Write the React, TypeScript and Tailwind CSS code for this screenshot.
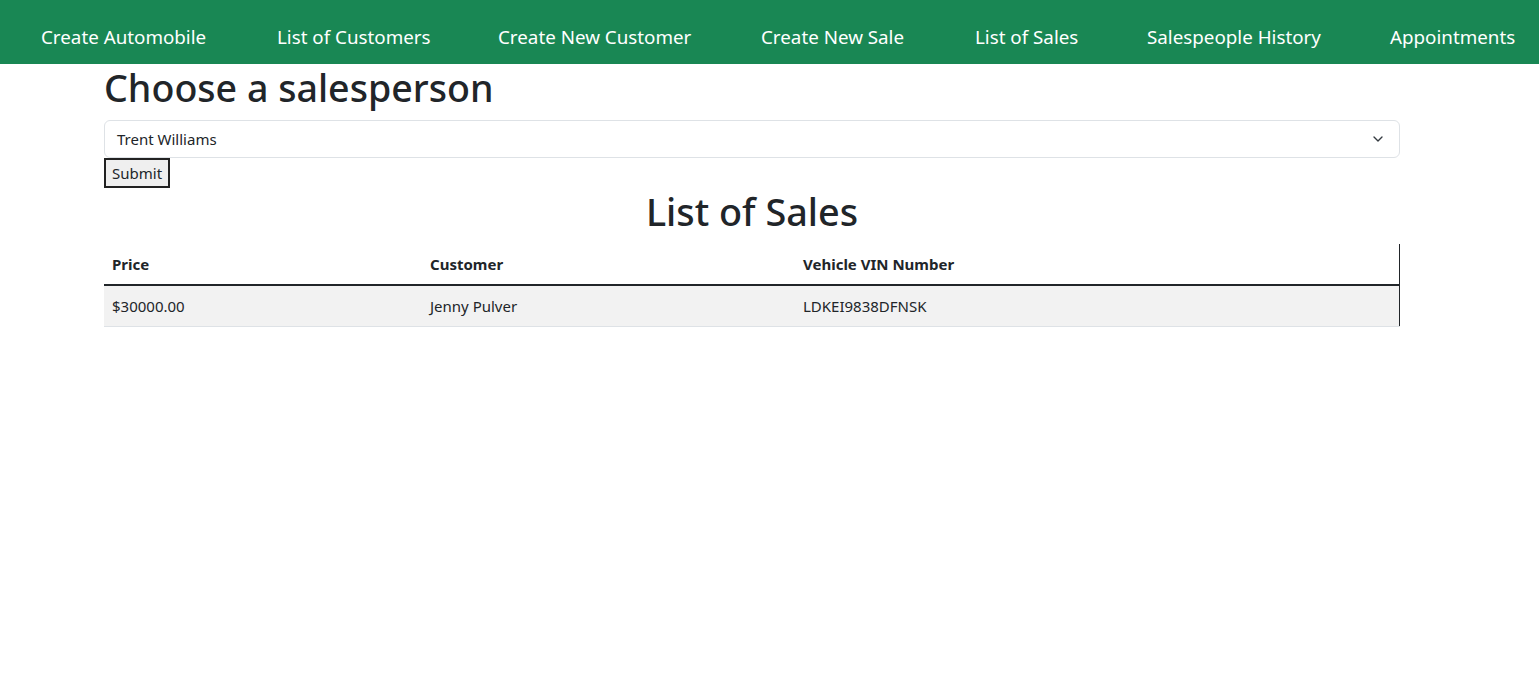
import { ChevronDown } from "lucide-react";

const navItems = [
  { label: "Create Automobile", w: "w-[236px]" },
  { label: "List of Customers", w: "w-[221px]" },
  { label: "Create New Customer", w: "w-[263px]" },
  { label: "Create New Sale", w: "w-[214px]" },
  { label: "List of Sales", w: "w-[172px]" },
  { label: "Salespeople History", w: "w-[243px]" },
  { label: "Appointments", w: "w-[140px]" },
];

const sales = [
  { price: "$30000.00", customer: "Jenny Pulver", vin: "LDKEI9838DFNSK" },
];

function App() {
  return (
    <div className="min-h-[696px] bg-white text-[#212529] font-['Segoe_UI','Noto_Sans',sans-serif]">
      {/* Nav */}
      <nav className="h-16 bg-[#198754] flex items-center pl-[41px] pt-[10px]">
        {navItems.map((item) => (
          <a key={item.label} className={`${item.w} shrink-0 text-white text-[18.8px] leading-none whitespace-nowrap`}>
            {item.label}
          </a>
        ))}
      </nav>

      <div className="ml-[104px] w-[1296px]">
        <h1 className="text-[37.6px] leading-[48px] font-medium mb-2">Choose a salesperson</h1>

        <div className="h-[38px] border border-[#dee2e6] rounded-md flex items-center justify-between pl-3 pr-[13px]">
          <span className="text-[15px]">Trent Williams</span>
          <ChevronDown size={16} strokeWidth={2} className="text-[#343a40]" />
        </div>

        <button className="h-[30px] px-[6px] border-2 border-[#222] bg-[#efefef] text-[15px] leading-none">
          Submit
        </button>

        <h1 className="text-[37.8px] leading-[48px] font-medium mb-2 text-center">List of Sales</h1>

        <table className="w-full border-r border-[#212529] text-[15px] border-collapse">
          <thead>
            <tr className="border-b-2 border-[#212529]">
              <th className="w-[318px] text-left font-bold px-2 h-[41px]">Price</th>
              <th className="w-[373px] text-left font-bold px-2 h-[41px]">Customer</th>
              <th className="text-left font-bold px-2 h-[41px]">Vehicle VIN Number</th>
            </tr>
          </thead>
          <tbody>
            {sales.map((s) => (
              <tr key={s.vin} className="bg-[#f2f2f2] border-b border-[#dee2e6]">
                <td className="px-2 h-[41px]">{s.price}</td>
                <td className="px-2 h-[41px]">{s.customer}</td>
                <td className="px-2 h-[41px]">{s.vin}</td>
              </tr>
            ))}
          </tbody>
        </table>
      </div>
    </div>
  );
}

export default App;
